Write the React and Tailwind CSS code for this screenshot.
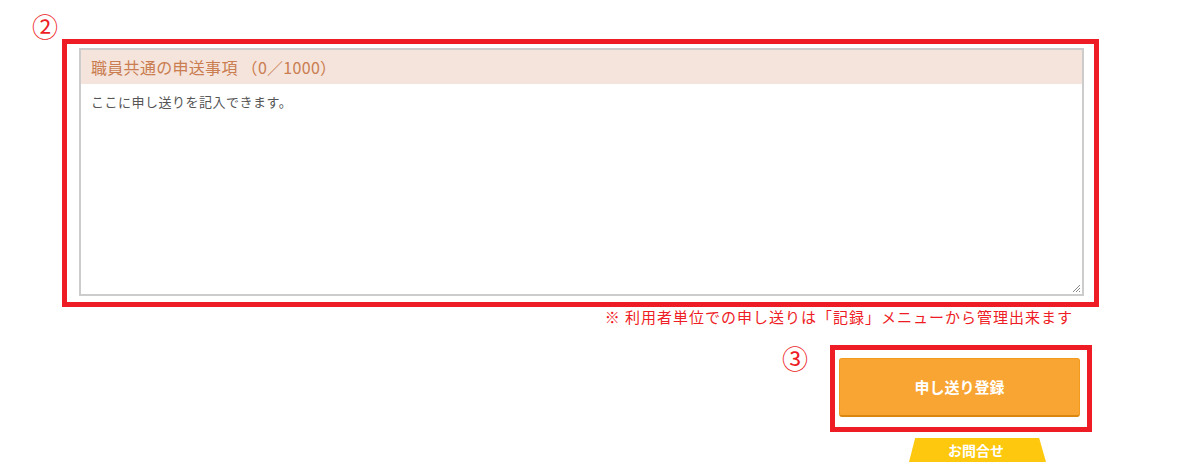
export default function App() {
  const font = { fontFamily: '"Noto Sans CJK JP", "Noto Sans", sans-serif' };
  return (
    <div className="w-[1201px] h-[462px] bg-white overflow-hidden" style={font}>
      <div className="pl-[32px] pt-[12px] h-[39px] text-[26px] leading-[27px] text-[#ee1c25]">②</div>
      <div className="ml-[62px] w-[1037px] h-[268px] border-[5px] border-[#ee1c25] pt-[4px] pl-[12px] pr-[10px] pb-[6px]">
        <div className="relative h-full border-2 border-[#cccccc] flex flex-col">
          <div className="h-[34px] bg-[#f5e4dc] pl-[10px] flex items-center text-[16px] tracking-[0.3px] text-[#c97d50]">
            職員共通の申送事項 （0／1000）
          </div>
          <div className="pl-[10px] pt-[9px] text-[13px] tracking-[0.5px] leading-[18px] text-[#555555]">
            ここに申し送りを記入できます。
          </div>
          <svg className="absolute right-[1px] bottom-[1px]" width="10" height="10" viewBox="0 0 10 10">
            <path d="M9 2 L2 9 M9 5 L5 9 M9 8 L8 9" stroke="#888" strokeWidth="1" />
          </svg>
        </div>
      </div>
      <div className="ml-[62px] w-[1037px] pr-[26px] text-right text-[15px] tracking-[1px] leading-[20px] text-[#ee1c25]">
        ※ 利用者単位での申し送りは「記録」メニューから管理出来ます
      </div>
      <div className="flex justify-end items-start gap-[22px] pr-[109px] mt-[18px]">
        <div className="text-[26px] leading-[27px] text-[#ee1c25] -mt-[1px]">③</div>
        <div className="w-[262px] h-[87px] border-[5px] border-[#ee1c25] pt-[8px] pl-[4px]">
          <button className="w-[241px] h-[59px] rounded-[3px] bg-[#f8a533] border border-[#f39a1c] border-b-2 border-b-[#d9870f] text-white font-bold text-[15px]">
            申し送り登録
          </button>
        </div>
      </div>
      <div className="flex justify-end pr-[155px] mt-[6px]">
        <div className="w-[137px] h-[24px] bg-[#fdc80e] text-white font-bold text-[14px] leading-[24px] text-center pr-[3px] [clip-path:polygon(4.5%_0,95%_0,100%_100%,0_100%)]">
          お問合せ
        </div>
      </div>
    </div>
  );
}
